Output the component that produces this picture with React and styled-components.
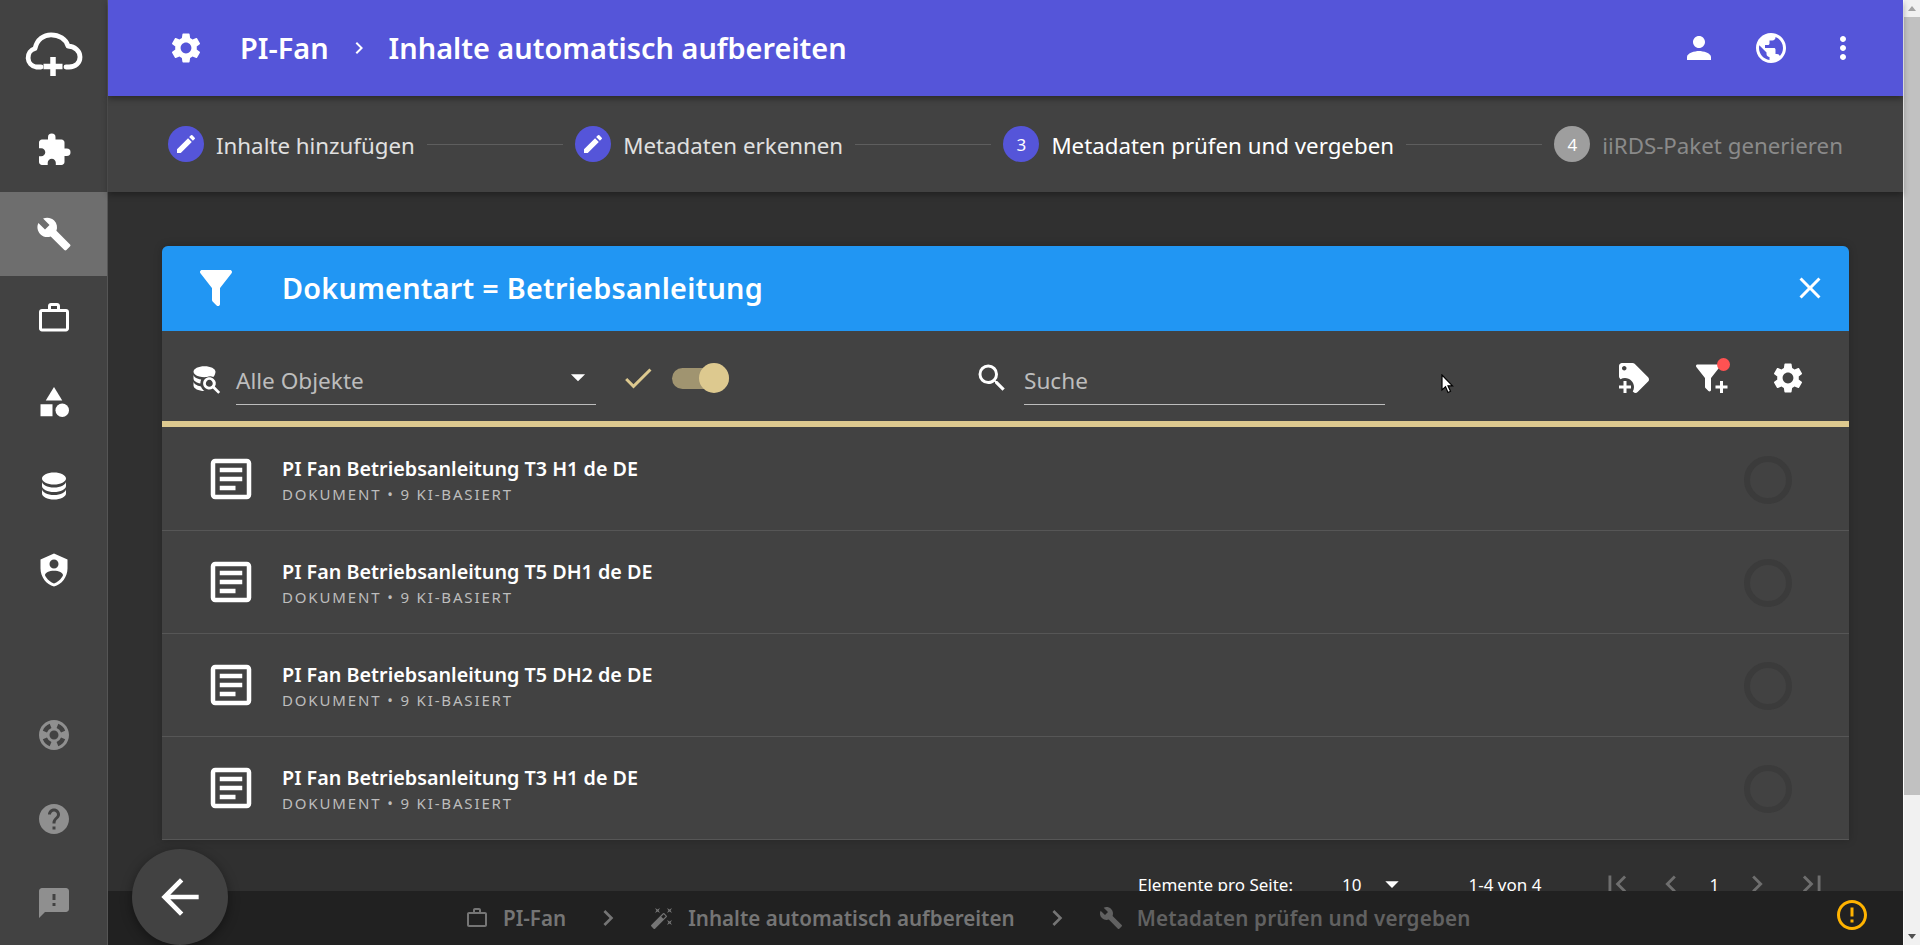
import React from 'react';
import styled, { createGlobalStyle } from 'styled-components';
import {
  MdSettings, MdExtension, MdBuild, MdWorkOutline, MdCategory, MdPerson, MdPublic, MdMoreVert,
  MdEdit, MdClose, MdCheck, MdSearch, MdArrowBack, MdErrorOutline, MdChevronRight, MdFirstPage,
  MdLastPage, MdSupport, MdHelp, MdFeedback, MdAutoFixHigh, MdOutlineArticle, MdArrowDropDown,
  MdChevronLeft,
} from 'react-icons/md';

const FONT = '"Noto Sans", "Open Sans", sans-serif';

const Global = createGlobalStyle`
  html, body { margin: 0; padding: 0; height: 100%; overflow: hidden; background: #303030; }
  * { box-sizing: border-box; }
  body { font-family: ${FONT}; color: #fff; }
`;

const Page = styled.div`
  position: relative;
  display: flex;
  width: 1920px;
  height: 945px;
  overflow: hidden;
`;

const Sidebar = styled.nav`
  width: 108px;
  flex: none;
  display: flex;
  flex-direction: column;
  background: #424242;
  border-right: 1px solid #555;
`;
const Logo = styled.div`
  height: 108px;
  display: flex;
  align-items: center;
  justify-content: center;
`;
const NavItem = styled.div`
  height: 84px;
  display: flex;
  align-items: center;
  justify-content: center;
  font-size: 36px;
  color: ${p => (p.$muted ? '#8f8f8f' : '#fff')};
  background: ${p => (p.$active ? '#6e6e6e' : 'transparent')};
`;
const NavSpacer = styled.div`
  flex: 1;
`;

const Main = styled.div`
  flex: 1;
  min-width: 0;
  display: flex;
  flex-direction: column;
`;

const Header = styled.header`
  position: relative;
  z-index: 2;
  height: 96px;
  flex: none;
  display: flex;
  align-items: center;
  padding: 0 42px 0 60px;
  background: #5555d9;
  box-shadow: 0 3px 6px rgba(0, 0, 0, .35);
  font-size: 36px;
`;
const HeaderTitle = styled.span`
  font-size: 28.9px;
  line-height: 36px;
  font-weight: 600;
  margin-left: ${p => p.$ml || 0}px;
`;
const HeaderChevron = styled.span`
  display: flex;
  font-size: 24px;
  margin: 0 18px 0 18px;
`;
const HeaderActions = styled.div`
  margin-left: auto;
  display: flex;
  gap: 36px;
`;

const Stepper = styled.div`
  position: relative;
  z-index: 1;
  height: 96px;
  flex: none;
  display: flex;
  align-items: center;
  padding: 0 60px 0 60px;
  background: #424242;
  box-shadow: 0 3px 6px rgba(0, 0, 0, .3);
`;
const StepCircle = styled.span`
  width: 36px;
  height: 36px;
  flex: none;
  border-radius: 50%;
  display: flex;
  align-items: center;
  justify-content: center;
  background: ${p => (p.$off ? '#9e9e9e' : '#5555d9')};
  font-size: 17px;
  color: #fff;
`;
const StepLabel = styled.span`
  margin-left: 12px;
  padding-top: 2px;
  font-size: 22.3px;
  white-space: nowrap;
  color: ${p => (p.$off ? '#8a8a8a' : p.$current ? '#fff' : '#e0e0e0')};
`;
const StepLine = styled.span`
  flex: 1;
  height: 1px;
  margin: 0 12px;
  background: #5e5e5e;
`;

const Content = styled.div`
  flex: 1;
  padding: 54px 54px 0;
`;

const Card = styled.section`
  border-radius: 6px 6px 0 0;
  background: #424242;
  box-shadow: 0 0 8px rgba(0, 0, 0, .22);
`;
const Banner = styled.div`
  height: 85px;
  display: flex;
  align-items: center;
  padding: 0 21px 2px 30px;
  background: #2196f3;
  border-radius: 6px 6px 0 0;
  font-size: 36px;
`;
const BannerTitle = styled.span`
  margin-left: 42px;
  font-size: 28.8px;
  font-weight: 600;
  letter-spacing: .25px;
`;
const BannerClose = styled.span`
  margin-left: auto;
  display: flex;
`;

const Toolbar = styled.div`
  position: relative;
  height: 96px;
  display: flex;
  align-items: center;
  padding: 4px 43px 0 26px;
  border-bottom: 6px solid #ddc98f;
  font-size: 36px;
`;
const FieldIcon = styled.span`
  display: flex;
  font-size: ${p => p.$size || 30}px;
  margin-right: ${p => p.$mr || 0}px;
  margin-left: ${p => p.$ml || 0}px;
`;
const Field = styled.div`
  width: ${p => p.$w}px;
  height: 50px;
  margin-top: 4px;
  padding-bottom: 8px;
  display: flex;
  align-items: flex-end;
  justify-content: space-between;
  border-bottom: 1px solid #bdbdbd;
  font-size: 22.6px;
  color: #bdbdbd;
`;
const SelectArrow = styled.span`
  display: flex;
  font-size: 34px;
  color: #fff;
  margin: 0 1px 2px 0;
`;
const CheckMark = styled.span`
  display: flex;
  font-size: 36px;
  color: #ddc98f;
  margin-left: 24px;
`;
const Toggle = styled.span`
  position: relative;
  width: 57px;
  height: 21px;
  margin-left: 16px;
  border-radius: 11px;
  background: #a09470;
`;
const ToggleThumb = styled.span`
  position: absolute;
  top: -5px;
  right: 0;
  width: 30px;
  height: 30px;
  border-radius: 50%;
  background: #ddc98f;
`;
const ToolActions = styled.div`
  margin-left: auto;
  display: flex;
  gap: 41px;
`;
const ToolButton = styled.span`
  position: relative;
  display: flex;
`;
const RedDot = styled.span`
  position: absolute;
  top: -2px;
  right: -1px;
  width: 13px;
  height: 13px;
  border-radius: 50%;
  background: #ff5252;
`;
const Cursor = styled.svg`
  position: absolute;
  left: 1279px;
  top: 43px;
  width: 14px;
  height: 20px;
`;

const RowList = styled.div`
  padding-top: 1px;
`;
const Row = styled.div`
  height: 103px;
  display: flex;
  align-items: center;
  padding: 0 57px 0 42px;
  border-bottom: 1px solid #565656;
`;
const DocIcon = styled.span`
  display: flex;
  font-size: 54px;
`;
const RowText = styled.div`
  margin-left: 24px;
  margin-top: 2px;
`;
const RowTitle = styled.div`
  font-size: 19.75px;
  font-weight: 600;
  line-height: 26px;
`;
const RowSub = styled.div`
  margin-top: 3px;
  font-size: 15px;
  line-height: 19px;
  letter-spacing: 1.85px;
  color: #bdbdbd;
`;
const Ring = styled.span`
  margin-left: auto;
  margin-top: 1px;
  width: 48px;
  height: 48px;
  border-radius: 50%;
  border: 6px solid #3b3b3b;
`;

const Pager = styled.div`
  height: 88px;
  display: flex;
  align-items: center;
  padding-left: 976px;
  font-size: 17px;
`;
const PagerText = styled.span`
  white-space: nowrap;
  margin-left: ${p => p.$ml || 0}px;
`;
const PagerArrow = styled.span`
  display: flex;
  font-size: 32px;
  margin-left: 15px;
  width: 32px;
`;
const PagerIcon = styled.span`
  display: flex;
  font-size: 34px;
  color: #6e6e6e;
  margin-left: ${p => p.$ml || 0}px;
`;

const BottomBar = styled.footer`
  position: absolute;
  left: 108px;
  right: 17px;
  bottom: 0;
  height: 54px;
  display: flex;
  align-items: center;
  padding: 0 33px 0 357px;
  background: #212121;
  color: #757575;
  font-size: 20.6px;
  font-weight: 600;
`;
const Crumb = styled.span`
  display: flex;
  align-items: center;
  color: ${p => (p.$dim ? '#616161' : '#757575')};
  letter-spacing: ${p => (p.$dim ? '.2px' : '0')};
  white-space: nowrap;
`;
const CrumbIcon = styled.span`
  display: flex;
  font-size: 24px;
  margin-right: 14px;
`;
const CrumbSep = styled.span`
  display: flex;
  font-size: 32px;
  margin: 0 26px 0 26px;
`;
const Warn = styled.span`
  display: flex;
  margin: 0 0 6px auto;
  font-size: 36px;
  color: #ffb300;
`;

const Fab = styled.button`
  position: absolute;
  left: 132px;
  top: 849px;
  width: 96px;
  height: 96px;
  padding: 0;
  border: 0;
  border-radius: 50%;
  display: flex;
  align-items: center;
  justify-content: center;
  background: #424242;
  color: #fff;
  font-size: 56px;
  box-shadow: 0 3px 12px rgba(0, 0, 0, .4);
`;

const Scrollbar = styled.div`
  width: 17px;
  flex: none;
  display: flex;
  flex-direction: column;
  align-items: center;
  background: #f1f1f1;
  border-left: 1px solid #fff;
`;
const ScrollArrow = styled.span`
  height: 17px;
  width: 100%;
  display: flex;
  align-items: center;
  justify-content: center;
  flex: none;
  margin-top: ${p => (p.$end ? 'auto' : 0)};
  &::before {
    content: '';
    border-left: 4px solid transparent;
    border-right: 4px solid transparent;
    ${p => (p.$end ? 'border-top: 5px solid #505050;' : 'border-bottom: 5px solid #a3a3a3;')}
  }
`;
const ScrollThumb = styled.span`
  width: 100%;
  height: 778px;
  flex: none;
  background: #c1c1c1;
`;

const Svg = ({ d, children, ...rest }) => (
  <svg viewBox="0 0 24 24" width="1em" height="1em" fill="currentColor" {...rest}>
    {d ? <path d={d} /> : children}
  </svg>
);

const P = {
  db: 'M12,3C7.58,3 4,4.79 4,7C4,9.21 7.58,11 12,11C16.42,11 20,9.21 20,7C20,4.79 16.42,3 12,3M4,9V12C4,14.21 7.58,16 12,16C16.42,16 20,14.21 20,12V9C20,11.21 16.42,13 12,13C7.58,13 4,11.21 4,9M4,14V17C4,19.21 7.58,21 12,21C16.42,21 20,19.21 20,17V14C20,16.21 16.42,18 12,18C7.58,18 4,16.21 4,14Z',
  shield: 'M12,1L3,5V11C3,16.55 6.84,21.74 12,23C17.16,21.74 21,16.55 21,11V5L12,1M12,5A3,3 0 0,1 15,8A3,3 0 0,1 12,11A3,3 0 0,1 9,8A3,3 0 0,1 12,5M17.13,17C15.92,18.85 14.11,20.24 12,20.92C9.89,20.24 8.08,18.85 6.87,17C6.53,16.5 6.24,16 6,15.47C6,13.82 8.71,12.47 12,12.47C15.29,12.47 18,13.79 18,15.47C17.76,16 17.47,16.5 17.13,17Z',
  filter: 'M14,12V19.88C14.04,20.18 13.94,20.5 13.71,20.71C13.32,21.1 12.69,21.1 12.3,20.71L10.29,18.7C10.06,18.47 9.96,18.16 10,17.87V12H9.97L4.21,4.62C3.87,4.19 3.95,3.56 4.38,3.22C4.57,3.08 4.78,3 5,3H19C19.22,3 19.43,3.08 19.62,3.22C20.05,3.56 20.13,4.19 19.79,4.62L14.03,12H14Z',
  tagPlus: 'M21.41,11.58L12.41,2.58C12.04,2.21 11.53,2 11,2H4C2.9,2 2,2.9 2,4V11C2,11.5 2.2,12 2.59,12.41L3,12.81C3.9,12.27 4.94,12 6,12C9.31,12 12,14.69 12,18C12,19.06 11.72,20.09 11.18,21L11.58,21.4C11.96,21.78 12.47,22 13,22C13.53,22 14.04,21.79 14.41,21.41L21.41,14.41C21.79,14.04 22,13.53 22,13C22,12.47 21.79,11.96 21.41,11.58M5.5,7C4.67,7 4,6.33 4,5.5C4,4.67 4.67,4 5.5,4C6.33,4 7,4.67 7,5.5C7,6.33 6.33,7 5.5,7M10,19H7V22H5V19H2V17H5V14H7V17H10V19Z',
  filterPlus: 'M12 12V19.88C12.04 20.18 11.94 20.5 11.71 20.71C11.32 21.1 10.69 21.1 10.3 20.71L8.29 18.7C8.06 18.47 7.96 18.16 8 17.87V12H7.97L2.21 4.62C1.87 4.19 1.95 3.56 2.38 3.22C2.57 3.08 2.78 3 3 3H17C17.22 3 17.43 3.08 17.62 3.22C18.05 3.56 18.13 4.19 17.79 4.62L12.03 12H12M15 17H18V14H20V17H23V19H20V22H18V19H15V17Z',
  dbSearch: 'M18.68,12.32C16.92,10.56 14.07,10.56 12.32,12.32C10.56,14.08 10.56,16.93 12.32,18.68C13.86,20.22 16.27,20.43 18.05,19.24L22,23.15L23.39,21.76L19.5,17.87C20.69,16.09 20.5,13.69 18.68,12.32M17.27,17.27C16.29,18.25 14.71,18.25 13.73,17.27C12.75,16.29 12.75,14.71 13.73,13.73C14.71,12.75 16.29,12.75 17.27,13.73C18.25,14.71 18.25,16.29 17.27,17.27M10.9,20.1C10.25,19.44 9.74,18.65 9.42,17.78C6.27,17.25 4,15.76 4,14V17C4,19.21 7.58,21 12,21C11.59,21 11.22,20.5 10.9,20.1M4,9V12C4,13.68 6.07,15.12 9,15.7C9,15.63 9,15.57 9,15.5C9,14.5 9.2,13.54 9.58,12.67C6.34,12.17 4,10.72 4,9M12,3C7.58,3 4,4.79 4,7C4,8.5 5.7,9.8 8.2,10.5C9.5,10.8 10.8,11 12,11C12.6,11 13.17,10.97 13.73,10.91C15.21,10.33 16.91,10.29 18.37,10.83C19.37,10.09 20,8.14 20,7C20,4.79 16.42,3 12,3Z',
};

const rows = ['PI Fan Betriebsanleitung T3 H1 de DE', 'PI Fan Betriebsanleitung T5 DH1 de DE', 'PI Fan Betriebsanleitung T5 DH2 de DE', 'PI Fan Betriebsanleitung T3 H1 de DE'];

export default function App() {
  return (
    <Page>
      <Global />
      <Sidebar>
        <Logo>
          <svg width="60" height="46" viewBox="0 0 60 46" fill="none" stroke="#fff" strokeWidth="4.8" strokeLinecap="round" strokeLinejoin="round">
            <path d="M17 36H12A9.500 9.500 0 0 1 11 17.500C13 8 20 3.800 27 3.800C35 3.800 42 8 44 15C51 15.500 56 20 56 26C56 32 51.500 36 45 36H42" />
            <path d="M29 26V45M19.500 35.500H38.500" strokeWidth="5.500" strokeLinecap="butt" />
          </svg>
        </Logo>
        <NavItem><MdExtension /></NavItem>
        <NavItem $active><MdBuild /></NavItem>
        <NavItem><MdWorkOutline /></NavItem>
        <NavItem><MdCategory /></NavItem>
        <NavItem><Svg d={P.db} /></NavItem>
        <NavItem><Svg d={P.shield} /></NavItem>
        <NavSpacer />
        <NavItem $muted><MdSupport /></NavItem>
        <NavItem $muted><MdHelp /></NavItem>
        <NavItem $muted><MdFeedback /></NavItem>
      </Sidebar>

      <Main>
        <Header>
          <MdSettings />
          <HeaderTitle $ml={36}>PI-Fan</HeaderTitle>
          <HeaderChevron><MdChevronRight /></HeaderChevron>
          <HeaderTitle>Inhalte automatisch aufbereiten</HeaderTitle>
          <HeaderActions>
            <MdPerson />
            <MdPublic />
            <MdMoreVert />
          </HeaderActions>
        </Header>

        <Stepper>
          <StepCircle><MdEdit size={24} /></StepCircle>
          <StepLabel>Inhalte hinzufügen</StepLabel>
          <StepLine />
          <StepCircle><MdEdit size={24} /></StepCircle>
          <StepLabel>Metadaten erkennen</StepLabel>
          <StepLine />
          <StepCircle>3</StepCircle>
          <StepLabel $current>Metadaten prüfen und vergeben</StepLabel>
          <StepLine />
          <StepCircle $off>4</StepCircle>
          <StepLabel $off>iiRDS-Paket generieren</StepLabel>
        </Stepper>

        <Content>
          <Card>
            <Banner>
              <Svg d={P.filter} style={{ fontSize: 48 }} />
              <BannerTitle>Dokumentart = Betriebsanleitung</BannerTitle>
              <BannerClose><MdClose /></BannerClose>
            </Banner>
            <Toolbar>
              <FieldIcon $size={33} $mr={15}><Svg d={P.dbSearch} /></FieldIcon>
              <Field $w={360}>
                <span>Alle Objekte</span>
                <SelectArrow><MdArrowDropDown /></SelectArrow>
              </Field>
              <CheckMark><MdCheck /></CheckMark>
              <Toggle><ToggleThumb /></Toggle>
              <FieldIcon $size={36} $ml={245} $mr={14}><MdSearch /></FieldIcon>
              <Field $w={361}><span>Suche</span></Field>
              <ToolActions>
                <ToolButton><Svg d={P.tagPlus} /></ToolButton>
                <ToolButton><Svg d={P.filterPlus} /><RedDot /></ToolButton>
                <ToolButton><MdSettings /></ToolButton>
              </ToolActions>
              <Cursor viewBox="0 0 14 20">
                <path d="M1 1V16L4.500 12.800L7 18.500L9.500 17.300L7 11.800H11.500Z" fill="#fff" stroke="#000" strokeWidth="1.2" />
              </Cursor>
            </Toolbar>
            <RowList>
              {rows.map((t, i) => (
                <Row key={i}>
                  <DocIcon><MdOutlineArticle /></DocIcon>
                  <RowText>
                    <RowTitle>{t}</RowTitle>
                    <RowSub>DOKUMENT • 9 KI-BASIERT</RowSub>
                  </RowText>
                  <Ring />
                </Row>
              ))}
            </RowList>
          </Card>
          <Pager>
            <PagerText>Elemente pro Seite:</PagerText>
            <PagerText $ml={49}>10</PagerText>
            <PagerArrow><MdArrowDropDown /></PagerArrow>
            <PagerText $ml={60}>1-4 von 4</PagerText>
            <PagerIcon $ml={59}><MdFirstPage /></PagerIcon>
            <PagerIcon $ml={20}><MdChevronLeft /></PagerIcon>
            <PagerText $ml={21}>1</PagerText>
            <PagerIcon $ml={21}><MdChevronRight /></PagerIcon>
            <PagerIcon $ml={21}><MdLastPage /></PagerIcon>
          </Pager>
        </Content>
      </Main>

      <Scrollbar>
        <ScrollArrow />
        <ScrollThumb />
        <ScrollArrow $end />
      </Scrollbar>

      <BottomBar>
        <Crumb><CrumbIcon><MdWorkOutline /></CrumbIcon>PI-Fan</Crumb>
        <CrumbSep><MdChevronRight /></CrumbSep>
        <Crumb><CrumbIcon><MdAutoFixHigh /></CrumbIcon>Inhalte automatisch aufbereiten</Crumb>
        <CrumbSep><MdChevronRight /></CrumbSep>
        <Crumb $dim><CrumbIcon><MdBuild /></CrumbIcon>Metadaten prüfen und vergeben</Crumb>
        <Warn><MdErrorOutline /></Warn>
      </BottomBar>
      <Fab><MdArrowBack /></Fab>
    </Page>
  );
}
